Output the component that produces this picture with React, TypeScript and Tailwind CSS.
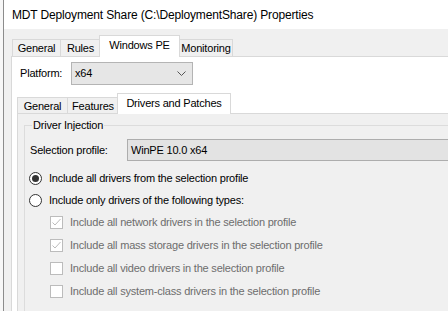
import type { ReactNode } from "react";

const font = { fontFamily: '"Liberation Sans", Arial, sans-serif' };

interface TabProp {
  label: string;
  width: string;
  selected?: boolean;
  first?: boolean;
  inner?: boolean;
}

const Tab = ({ label, width, selected, first, inner }: TabProp) => {
  if (selected) {
    return (
      <div
        className={`relative z-10 -mb-px flex ${width} ${inner ? "h-[21px] pt-[1px]" : "h-[22px] pt-[1px]"} -ml-[2px] items-start justify-center border-x border-t border-[#d9d9d9] bg-white`}
      >
        <span className="leading-[16px]">{label}</span>
      </div>
    );
  }
  return (
    <div
      className={`flex ${width} ${inner ? "h-[16px]" : "h-[17px]"} ${first ? "" : "-ml-px"} items-center justify-center border-x border-t border-[#d9d9d9] bg-[#f0f0f0]`}
    >
      <span className="leading-[14px]">{label}</span>
    </div>
  );
};

const Check = ({ checked, children }: { checked?: boolean; children: ReactNode }) => (
  <div className="flex h-[23px] items-center pl-[25px]">
    <div className="flex h-[13px] w-[13px] items-center justify-center border border-[#bcbcbc] bg-white">
      {checked && (
        <svg width="11" height="11" viewBox="0 0 11 11">
          <polyline points="1.5,5.5 4,8 9.5,2" fill="none" stroke="#bcbcbc" strokeWidth="1" />
        </svg>
      )}
    </div>
    <span className="ml-[7px] text-[#6d6d6d]">{children}</span>
  </div>
);

const Radio = ({ checked, children }: { checked?: boolean; children: ReactNode }) => (
  <div className="flex h-[22px] items-center pl-[4px]">
    <div className="flex h-[13px] w-[13px] items-center justify-center rounded-full border border-[#333333] bg-white">
      {checked && <div className="h-[7px] w-[7px] rounded-full bg-[#333333]" />}
    </div>
    <span className="ml-[7px]">{children}</span>
  </div>
);

export default function App() {
  return (
    <div
      className="flex h-[311px] w-[448px] overflow-hidden bg-[#f7f7f7] text-[11px] tracking-[-0.2px] text-black"
      style={font}
    >
      <div className="w-[3px] shrink-0" />
      <div className="w-px shrink-0 bg-[#8c8c8c]" />
      <div className="flex min-w-0 flex-1 flex-col">
        <div className="flex h-[29px] shrink-0 items-center bg-white pl-[8px] text-[12px] tracking-[-0.15px]">
          MDT Deployment Share (C:\DeploymentShare) Properties
        </div>
        <div className="flex flex-1 flex-col bg-[#f0f0f0] pl-[7px] pt-[6px]">
          <div className="flex h-[21px] items-end pl-[1px]">
            <Tab label="General" width="w-[49px]" first />
            <Tab label="Rules" width="w-[41px]" />
            <Tab label="Windows PE" width="w-[81px]" selected />
            <Tab label="Monitoring" width="w-[54px]" />
          </div>
          <div className="flex w-[600px] flex-1 flex-col border-l border-t border-[#d9d9d9] bg-white pt-[5px]">
            <div className="flex items-center pl-[8px]">
              <span className="w-[51px]">Platform:</span>
              <div className="flex h-[23px] w-[122px] items-center justify-between border border-[#b4b4b4] bg-[#e6e6e6] pl-[3px] pr-[6px]">
                <span>x64</span>
                <svg width="9" height="5" viewBox="0 0 9 5">
                  <polyline points="0.5,0.5 4.5,4.5 8.5,0.5" fill="none" stroke="#555555" strokeWidth="1" />
                </svg>
              </div>
            </div>
            <div className="mt-[8px] flex h-[20px] items-end pl-[5px]">
              <Tab label="General" width="w-[51px]" first inner />
              <Tab label="Features" width="w-[52px]" inner />
              <Tab label="Drivers and Patches" width="w-[114px]" selected inner />
            </div>
            <div className="ml-[5px] flex flex-1 flex-col border-l border-t border-[#d9d9d9] bg-[#f0f0f0] pl-[6px]">
              <div className="relative mt-[11px] flex flex-1 flex-col border-l border-t border-[#dcdcdc]">
                <span className="absolute -top-[7px] left-[7px] bg-[#f0f0f0] px-[1px] leading-[13px]">
                  Driver Injection
                </span>
                <div className="mt-[13px] flex h-[22px] items-center pl-[5px]">
                  <span className="w-[97px]">Selection profile:</span>
                  <div className="flex h-[22px] flex-1 items-center border border-[#adadad] bg-[#e3e3e3] pl-[3px]">
                    WinPE 10.0 x64
                  </div>
                </div>
                <div className="mt-[6px]">
                  <Radio checked>Include all drivers from the selection profile</Radio>
                  <Radio>Include only drivers of the following types:</Radio>
                  <Check checked>Include all network drivers in the selection profile</Check>
                  <Check checked>Include all mass storage drivers in the selection profile</Check>
                  <Check>Include all video drivers in the selection profile</Check>
                  <Check>Include all system-class drivers in the selection profile</Check>
                </div>
              </div>
            </div>
          </div>
        </div>
      </div>
    </div>
  );
}
